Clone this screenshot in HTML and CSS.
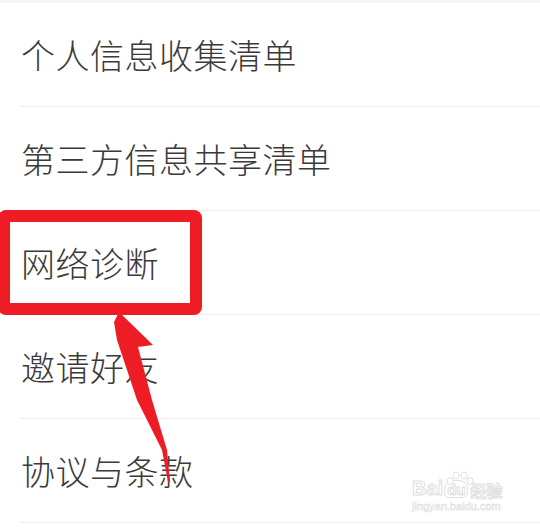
FILE: index.html
```html
<!DOCTYPE html>
<html lang="zh">
<head>
<meta charset="utf-8">
<link rel="stylesheet" href="styles.css">
</head>
<body>
<div class="page">
  <div class="topbar"></div>
  <ul class="list">
    <li class="item">个人信息收集清单</li>
    <li class="item">第三方信息共享清单</li>
    <li class="item">网络诊断</li>
    <li class="item">邀请好友</li>
    <li class="item">协议与条款</li>
  </ul>
  <div class="highlight"></div>
  <svg class="arrow" width="540" height="528" viewBox="0 0 540 528">
    <polygon fill="#ee1c25" points="119,312 153,345 138,347 152,400 167,450 170,482 168,482 162,450 137,400 126,367 117,340 114,322"/>
  </svg>
  <div class="watermark">
    <svg class="wm-paw" width="30" height="14" viewBox="0 0 30 14">
      <g fill="#ffffff" stroke="#e0e0e0" stroke-width="1">
        <ellipse cx="5" cy="10" rx="3" ry="3.5"/>
        <ellipse cx="11" cy="4.5" rx="3" ry="3.5"/>
        <ellipse cx="19" cy="4.5" rx="3" ry="3.5"/>
        <ellipse cx="25" cy="10" rx="3" ry="3.5"/>
      </g>
    </svg>
    <div class="wm-top"><span class="wm-bai">Bai</span><span class="wm-du">du</span><span class="wm-jy">经验</span></div>
    <div class="wm-url">jingyan.baidu.com</div>
  </div>
</div>
</body>
</html>
```
FILE: styles.css
```css
html, body {
  margin: 0;
  padding: 0;
  background: #ffffff;
}
.page {
  position: relative;
  width: 540px;
  height: 528px;
  overflow: hidden;
  font-family: "Noto Sans CJK SC", "Noto Sans", sans-serif;
}
.topbar {
  height: 3px;
  background: #f4f4f4;
}
.list {
  list-style: none;
  margin: 0;
  padding: 0;
}
.item {
  height: 103px;
  margin-left: 20px;
  padding-left: 1px;
  display: flex;
  align-items: center;
  font-size: 34px;
  font-weight: 300;
  color: #3a3a3a;
  border-bottom: 1px solid #eeeeee;
  letter-spacing: 0.5px;
}
.highlight {
  position: absolute;
  left: -2px;
  top: 210px;
  width: 204px;
  height: 105px;
  box-sizing: border-box;
  border: 12px solid #ee1c25;
  border-radius: 8px;
}
.arrow {
  position: absolute;
  left: 0;
  top: 0;
}
.watermark {
  position: absolute;
  left: 412px;
  top: 471px;
  width: 100px;
  font-family: "Liberation Sans", sans-serif;
  color: #ffffff;
  -webkit-text-stroke: 1px #e0e0e0;
}
.wm-paw {
  position: absolute;
  left: 33px;
  top: 0;
}
.wm-top {
  display: flex;
  align-items: flex-end;
  height: 27px;
  font-size: 20px;
  font-weight: bold;
  line-height: 1;
}
.wm-du {
  font-size: 15px;
  margin: 0 2px 0 1px;
  padding: 1px 2px 0;
  border: 1px solid #e0e0e0;
  border-radius: 9px 9px 5px 5px;
}
.wm-jy {
  font-family: "Noto Sans CJK SC", sans-serif;
  font-size: 16px;
  line-height: 1;
}
.wm-url {
  font-size: 11px;
  line-height: 16px;
  -webkit-text-stroke: 0.6px #e0e0e0;
}
```
